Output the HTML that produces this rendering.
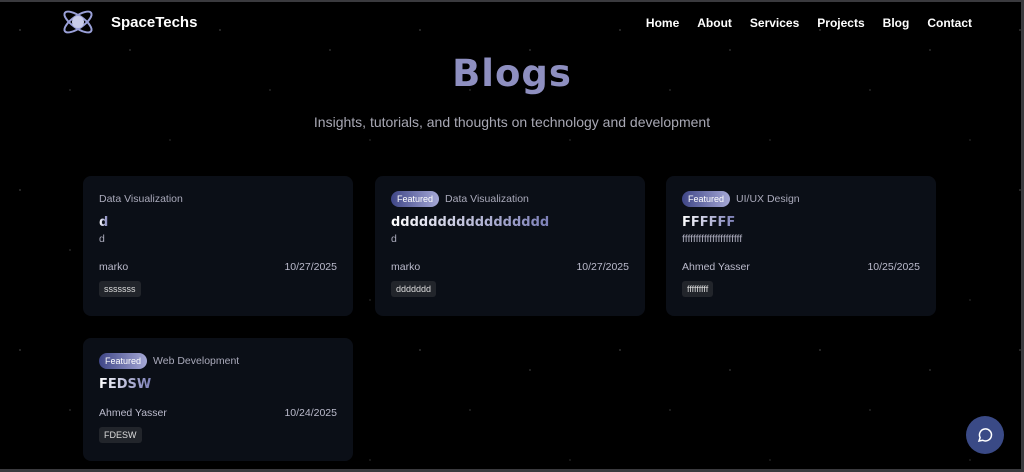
<!DOCTYPE html>
<html><head><meta charset="utf-8"><style>
*{margin:0;padding:0;box-sizing:border-box}
body{width:1024px;height:472px;background:#000;font-family:"Liberation Sans",sans-serif;color:#fff;position:relative;overflow:hidden}
.frame{position:absolute;inset:0;border-top:2px solid #3a3a3e;border-right:3px solid #3a3a3e;border-bottom:3px solid #3a3a3e;pointer-events:none;z-index:5}
.stars{position:absolute;inset:0;background-image:radial-gradient(1px 1px at 20px 30px,#fff8,transparent),radial-gradient(1px 1px at 70px 90px,#fff6,transparent),radial-gradient(1px 1px at 130px 50px,#fff7,transparent),radial-gradient(1px 1px at 170px 140px,#fff5,transparent);background-size:200px 160px}
.logo{position:absolute;left:60px;top:6px}
.brand{position:absolute;left:111px;top:14px;font-size:15px;font-weight:bold}
nav{position:absolute;top:16px;right:52px;font-size:12px;font-weight:bold}
nav span{margin-left:18px}
h1{position:absolute;top:52px;width:100%;text-align:center;font-size:37px;color:#8e8fc0;font-family:"DejaVu Sans",sans-serif;font-weight:bold;letter-spacing:1px}
.sub{position:absolute;top:114px;width:100%;text-align:center;font-size:14px;color:#a8a8b4}
.card{position:absolute;width:270px;background:#0b0f17;border-radius:8px;padding:14px 16px}
.cat{font-size:10.5px;color:#aab;display:flex;align-items:center;height:18px}
.feat{background:linear-gradient(90deg,#3f4687,#a5a8d6);border-radius:9px;padding:3px 6px;font-size:9px;color:#fff;margin-right:6px}
.t{font-family:"DejaVu Sans",sans-serif;font-weight:bold;font-size:13px;margin-top:7px;background:linear-gradient(90deg,#fff,#7d80b8);-webkit-background-clip:text;color:transparent;display:inline-block}
.d{font-size:10.5px;color:#aab;margin-top:2px}
.row{display:flex;justify-content:space-between;font-size:10.5px;color:#bbc;margin-top:16px}
.tag{display:inline-block;background:#22252b;border-radius:3px;font-size:9px;padding:3px 5px;margin-top:8px;color:#ddd}
.chat{position:absolute;left:966px;top:416px;width:38px;height:38px;border-radius:50%;background:#3a4a86;display:flex;align-items:center;justify-content:center}
</style></head><body>
<div class="stars"></div>
<svg class="logo" width="36" height="32" viewBox="0 0 36 32"><ellipse cx="18" cy="16" rx="16" ry="6" transform="rotate(35 18 16)" fill="none" stroke="#9aa0d8" stroke-width="2"/><ellipse cx="18" cy="16" rx="16" ry="6" transform="rotate(-35 18 16)" fill="none" stroke="#9aa0d8" stroke-width="2"/><circle cx="18" cy="16" r="6" fill="#c8cbe8"/></svg>
<div class="brand">SpaceTechs</div>
<nav><span>Home</span><span>About</span><span>Services</span><span>Projects</span><span>Blog</span><span>Contact</span></nav>
<h1>Blogs</h1>
<div class="sub">Insights, tutorials, and thoughts on technology and development</div>
<div class="card" style="left:83px;top:176px;height:140px"><div class="cat">Data Visualization</div><div class="t">d</div><div class="d">d</div><div class="row"><span>marko</span><span>10/27/2025</span></div><div class="tag">sssssss</div></div>
<div class="card" style="left:375px;top:176px;height:140px"><div class="cat"><span class="feat">Featured</span>Data Visualization</div><div class="t">ddddddddddddddddd</div><div class="d">d</div><div class="row"><span>marko</span><span>10/27/2025</span></div><div class="tag">ddddddd</div></div>
<div class="card" style="left:666px;top:176px;height:140px"><div class="cat"><span class="feat">Featured</span>UI/UX Design</div><div class="t">FFFFFF</div><div class="d">ffffffffffffffffffffff</div><div class="row"><span>Ahmed Yasser</span><span>10/25/2025</span></div><div class="tag">fffffffff</div></div>
<div class="card" style="left:83px;top:338px;height:123px"><div class="cat"><span class="feat">Featured</span>Web Development</div><div class="t">FEDSW</div><div class="row" style="margin-top:14px"><span>Ahmed Yasser</span><span>10/24/2025</span></div><div class="tag">FDESW</div></div>
<div class="chat"><svg width="18" height="18" viewBox="0 0 24 24" fill="none" stroke="#fff" stroke-width="2"><path d="M4 20l1.5-4.5A8 8 0 1 1 9 19z"/></svg></div>
<div class="frame"></div>
</body></html>
